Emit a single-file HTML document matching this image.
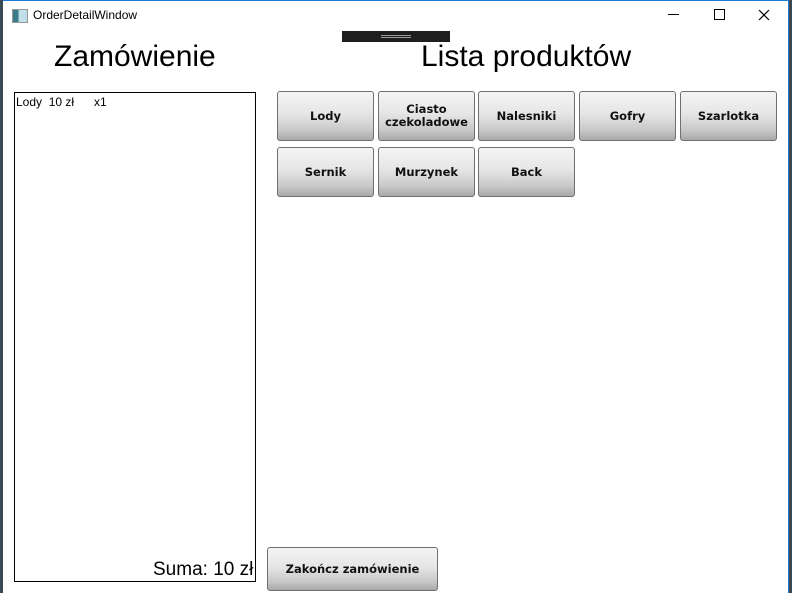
<!DOCTYPE html>
<html><head><meta charset="utf-8"><style>
body{margin:0;width:792px;height:592px;position:relative;overflow:hidden;background:#3a4a55;font-family:"Liberation Sans","DejaVu Sans",sans-serif}
.win{position:absolute;left:3px;top:0;width:785px;height:592px;background:#fff;border-top:1px solid #1a7ad6;border-right:1px solid #1a7ad6}
.a{position:absolute}
.btn{position:absolute;box-sizing:border-box;border:1px solid #707070;border-radius:3px;background:linear-gradient(#f4f4f4,#e6e6e6 45%,#c8c8c8 80%,#a8a8a8);font:bold 11.5px "DejaVu Sans",sans-serif;color:#111;display:flex;align-items:center;justify-content:center;text-align:center;line-height:13px}
</style></head><body>
<div class="win"></div>
<div class="a" style="left:12px;top:9px;width:14px;height:12px;border:1px solid #999;background:linear-gradient(90deg,#3a7a8a 40%,#bfe0e8 40%)"></div>
<div class="a" style="left:33px;top:8px;font-size:12px;color:#000">OrderDetailWindow</div>
<div class="a" style="left:668px;top:14px;width:11px;height:1px;background:#000"></div>
<div class="a" style="left:714px;top:9px;width:9px;height:9px;border:1px solid #000"></div>
<svg class="a" style="left:758px;top:9px" width="12" height="12"><path d="M1 1L11 11M11 1L1 11" stroke="#000" stroke-width="1.2"/></svg>
<div class="a" style="left:342px;top:31px;width:108px;height:11px;background:#1e1e1e"></div>
<div class="a" style="left:381px;top:35px;width:30px;height:1px;background:#999"></div>
<div class="a" style="left:381px;top:37px;width:30px;height:1px;background:#999"></div>
<div class="a" style="left:54px;top:40px;font-size:30px;color:#000">Zamówienie</div>
<div class="a" style="left:421px;top:40px;font-size:30px;color:#000">Lista produktów</div>
<div class="a" style="left:14px;top:92px;width:240px;height:488px;border:1px solid #000"></div>
<div class="a" style="left:16px;top:95px;font-size:12px;white-space:pre">Lody  10 zł      x1</div>
<div class="a" style="left:153px;top:559px;font-size:19px;width:102px;overflow:hidden;white-space:nowrap">Suma: 10 zł</div>
<div class="btn" style="left:277px;top:91px;width:97px;height:50px">Lody</div>
<div class="btn" style="left:378px;top:91px;width:97px;height:50px">Ciasto<br>czekoladowe</div>
<div class="btn" style="left:478px;top:91px;width:97px;height:50px">Nalesniki</div>
<div class="btn" style="left:579px;top:91px;width:97px;height:50px">Gofry</div>
<div class="btn" style="left:680px;top:91px;width:97px;height:50px">Szarlotka</div>
<div class="btn" style="left:277px;top:147px;width:97px;height:50px">Sernik</div>
<div class="btn" style="left:378px;top:147px;width:97px;height:50px">Murzynek</div>
<div class="btn" style="left:478px;top:147px;width:97px;height:50px">Back</div>
<div class="btn" style="left:267px;top:547px;width:171px;height:44px">Zakończ zamówienie</div>
</body></html>
